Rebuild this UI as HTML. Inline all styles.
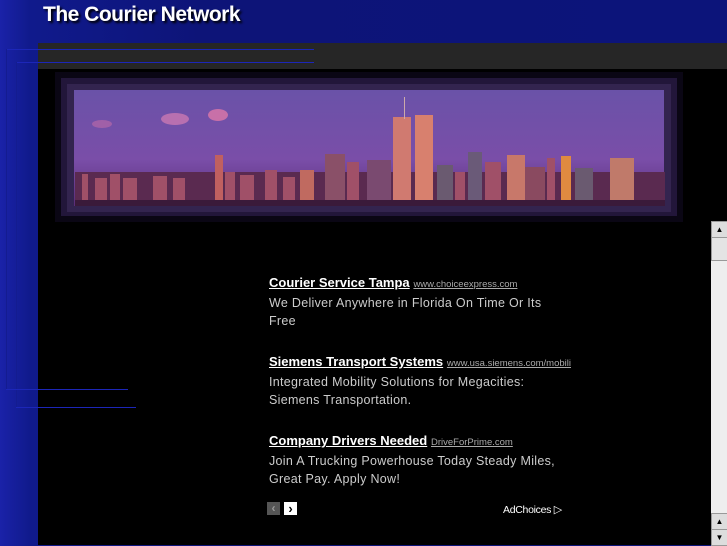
<!DOCTYPE html>
<html><head><style>
*{margin:0;padding:0}
body{width:727px;height:545px;overflow:hidden;position:relative;background:linear-gradient(90deg,#1a22a8 0,#101a8c 30px,#0d1478 200px,#0c147a 727px);font-family:"Liberation Sans",sans-serif}
.t{position:absolute;left:43px;top:3px;color:#fff;font:bold 21px "Liberation Sans",sans-serif;letter-spacing:-0.5px;text-shadow:2px 2px 2px #000}
.bar{position:absolute;left:38px;top:43px;width:689px;height:26px;background:#262626}
.main{position:absolute;left:38px;top:69px;width:689px;height:476px;background:#000}
.ln{position:absolute;height:1px;background:#1c26b8}
.vl{position:absolute;width:1px;background:#141c90}
.ad{position:absolute;left:269px;color:#ccc;font-size:12.5px;line-height:18px;letter-spacing:0.3px}
.ad b{color:#fff;text-decoration:underline;font-size:13px;letter-spacing:0}
.ad span{font-size:9.5px;color:#aaa;text-decoration:underline;letter-spacing:0}
.sb{position:absolute;left:711px;top:221px;width:16px;height:324px;background:#eee}
.btn{position:absolute;left:0;width:15px;height:15px;background:#ddd;border:1px solid #999;font-size:8px;text-align:center;line-height:15px;color:#000}
</style></head><body>
<div class="t">The Courier Network</div>
<div class="bar"></div>
<div class="main"></div>
<div class="ln" style="left:6px;top:49px;width:308px"></div>
<div class="ln" style="left:16px;top:62px;width:298px"></div>
<div class="vl" style="left:6px;top:49px;height:340px"></div>
<div class="vl" style="left:16px;top:62px;height:345px"></div>
<div class="ln" style="left:6px;top:389px;width:122px"></div>
<div class="ln" style="left:16px;top:407px;width:120px"></div>
<svg style="position:absolute;left:55px;top:72px" width="628" height="150">
<defs><linearGradient id="s" x1="0" y1="0" x2="0" y2="1"><stop offset="0" stop-color="#6a52a8"/><stop offset="0.6" stop-color="#7a4ea8"/><stop offset="1" stop-color="#5a2e78"/></linearGradient></defs>
<rect x="0" y="0" width="628" height="150" fill="#0a0614"/>
<rect x="6" y="6" width="616" height="138" fill="#22163a"/>
<rect x="12" y="12" width="604" height="128" fill="#33244f"/>
<rect x="19" y="18" width="590" height="116" fill="url(#s)"/>
<ellipse cx="120" cy="47" rx="14" ry="6" fill="#b870b0"/>
<ellipse cx="163" cy="43" rx="10" ry="6" fill="#c870a8"/>
<ellipse cx="47" cy="52" rx="10" ry="4" fill="#a060a8"/>
<g fill="#a05068">
<rect x="20" y="100" width="590" height="34" fill="#5a2a50"/>
<rect x="27" y="102" width="6" height="26"/><rect x="40" y="106" width="12" height="22"/><rect x="55" y="102" width="10" height="26"/><rect x="68" y="106" width="14" height="22"/>
<rect x="98" y="104" width="14" height="24"/><rect x="118" y="106" width="12" height="22"/><rect x="160" y="83" width="8" height="45" fill="#c06060"/>
<rect x="170" y="100" width="10" height="28"/><rect x="185" y="103" width="14" height="25"/><rect x="210" y="98" width="12" height="30"/><rect x="228" y="105" width="12" height="23"/>
<rect x="245" y="98" width="14" height="30" fill="#c06a60"/><rect x="270" y="82" width="20" height="46" fill="#8a5068"/><rect x="292" y="90" width="12" height="38"/>
<rect x="338" y="45" width="18" height="83" fill="#d07a70"/><rect x="360" y="43" width="18" height="85" fill="#d8806e"/><rect x="349" y="25" width="1" height="22" fill="#caa"/>
<rect x="312" y="88" width="24" height="40" fill="#7a4a70"/><rect x="382" y="93" width="16" height="35" fill="#6a5a70"/><rect x="400" y="100" width="10" height="28"/>
<rect x="413" y="80" width="14" height="48" fill="#6a5a78"/><rect x="430" y="90" width="16" height="38"/><rect x="452" y="83" width="18" height="45" fill="#c8786a"/>
<rect x="470" y="95" width="20" height="33" fill="#8a4a60"/><rect x="492" y="86" width="8" height="42"/><rect x="506" y="84" width="10" height="44" fill="#e08a40"/>
<rect x="520" y="96" width="18" height="32" fill="#6a5a70"/><rect x="555" y="86" width="24" height="42" fill="#c07a6a"/>
</g>
<rect x="20" y="128" width="590" height="6" fill="#3a1a3a"/>
</svg>
<div class="ad" style="top:274px"><b>Courier Service Tampa</b> <span>www.choiceexpress.com</span><br>We Deliver Anywhere in Florida On Time Or Its<br>Free</div>
<div class="ad" style="top:353px"><b>Siemens Transport Systems</b> <span>www.usa.siemens.com/mobili</span><br>Integrated Mobility Solutions for Megacities:<br>Siemens Transportation.</div>
<div class="ad" style="top:432px"><b>Company Drivers Needed</b> <span>DriveForPrime.com</span><br>Join A Trucking Powerhouse Today Steady Miles,<br>Great Pay. Apply Now!</div>
<div style="position:absolute;left:267px;top:502px;width:13px;height:13px;background:#555;color:#999;font:bold 12px sans-serif;text-align:center;line-height:13px">&lsaquo;</div>
<div style="position:absolute;left:284px;top:502px;width:13px;height:13px;background:#fff;color:#000;font:bold 13px sans-serif;text-align:center;line-height:13px">&rsaquo;</div>
<div style="position:absolute;left:503px;top:503px;color:#fff;font-size:10.5px;letter-spacing:-0.3px">AdChoices <span style="font-size:11px">&#9655;</span></div>
<div class="sb">
<div class="btn" style="top:0">&#9650;</div>
<div class="btn" style="top:16px;height:22px;background:#e4e4e4"></div>
<div class="btn" style="top:292px">&#9650;</div>
<div class="btn" style="top:308px">&#9660;</div>
</div>
</body></html>
